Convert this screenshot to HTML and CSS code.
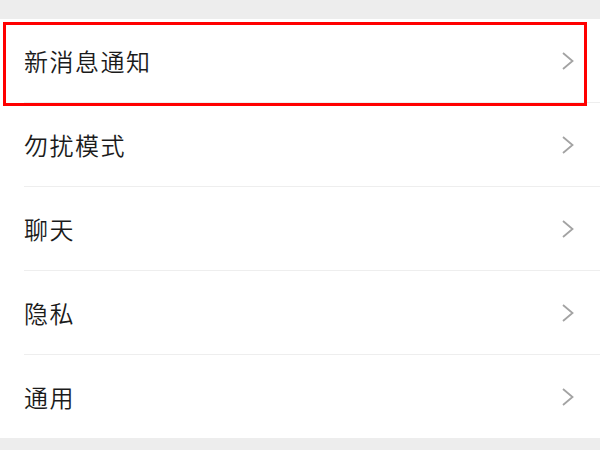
FILE: index.html
```html
<!DOCTYPE html>
<html lang="zh">
<head>
<meta charset="utf-8">
<link rel="stylesheet" href="styles.css">
</head>
<body>
<div class="page">
  <div class="band"></div>
  <ul class="list">
    <li class="row"><div class="inner"><span class="label">新消息通知</span><svg class="chev" width="12" height="18" viewBox="0 0 12 18"><path d="M1 1 L10.5 9 L1 17" fill="none" stroke="#a3a3a3" stroke-width="1.8"/></svg></div></li>
    <li class="row"><div class="inner"><span class="label">勿扰模式</span><svg class="chev" width="12" height="18" viewBox="0 0 12 18"><path d="M1 1 L10.5 9 L1 17" fill="none" stroke="#a3a3a3" stroke-width="1.8"/></svg></div></li>
    <li class="row"><div class="inner"><span class="label">聊天</span><svg class="chev" width="12" height="18" viewBox="0 0 12 18"><path d="M1 1 L10.5 9 L1 17" fill="none" stroke="#a3a3a3" stroke-width="1.8"/></svg></div></li>
    <li class="row"><div class="inner"><span class="label">隐私</span><svg class="chev" width="12" height="18" viewBox="0 0 12 18"><path d="M1 1 L10.5 9 L1 17" fill="none" stroke="#a3a3a3" stroke-width="1.8"/></svg></div></li>
    <li class="row"><div class="inner"><span class="label">通用</span><svg class="chev" width="12" height="18" viewBox="0 0 12 18"><path d="M1 1 L10.5 9 L1 17" fill="none" stroke="#a3a3a3" stroke-width="1.8"/></svg></div></li>
  </ul>
  <div class="band bottom"></div>
  <div class="highlight"></div>
</div>
</body>
</html>
```
FILE: styles.css
```css
html, body {
  margin: 0;
  padding: 0;
  background: #ededed;
}
.page {
  position: relative;
  width: 600px;
  height: 450px;
  overflow: hidden;
  font-family: "Noto Sans CJK SC", "Noto Sans", sans-serif;
}
.band {
  height: 19px;
  background: #ededed;
}
.band.bottom {
  height: 12px;
}
.list {
  list-style: none;
  margin: 0;
  padding: 0;
  background: #ffffff;
}
.row {
  padding-left: 24px;
}
.inner {
  height: 83px;
  display: flex;
  align-items: center;
  justify-content: space-between;
  padding-right: 26px;
  border-bottom: 1px solid #eeeeee;
}
.row:last-child .inner {
  border-bottom: none;
}
.label {
  font-size: 24px;
  font-weight: 350;
  color: #1b1b1b;
  letter-spacing: 1.5px;
}
.chev {
  display: block;
}
.highlight {
  position: absolute;
  left: 3px;
  top: 22px;
  width: 578px;
  height: 78px;
  border: 3px solid #ff0000;
}
```
